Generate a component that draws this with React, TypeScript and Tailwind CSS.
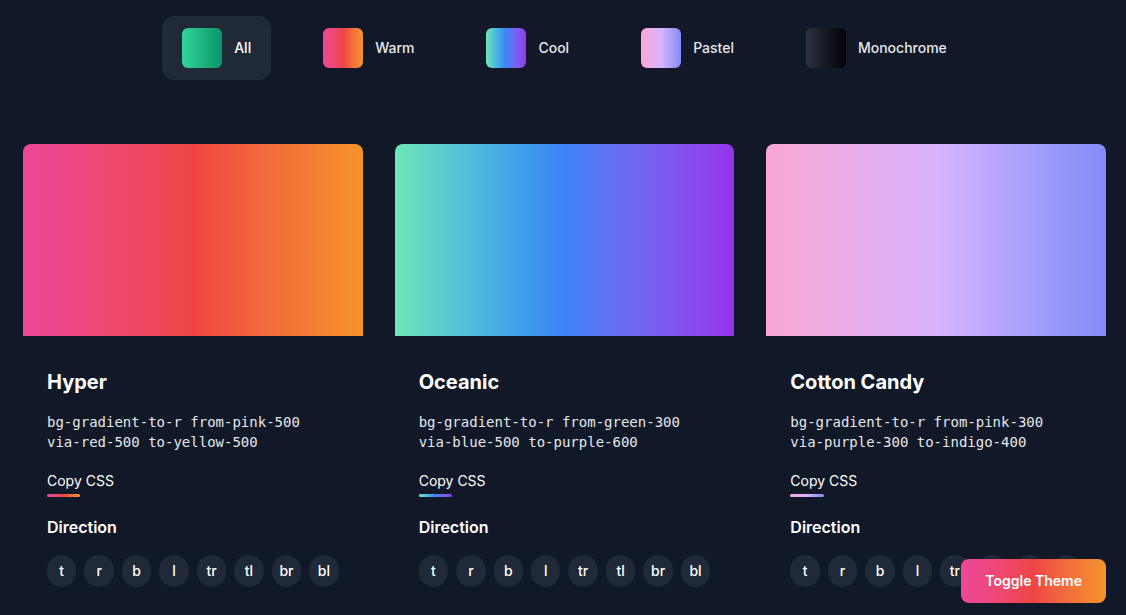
import { useState } from "react";

const tabs = [
  { label: "All", swatch: "bg-gradient-to-r from-[#34d399] to-[#059669]" },
  { label: "Warm", swatch: "bg-gradient-to-r from-[#ec4899] via-[#ef4444] to-[#f4932a]" },
  { label: "Cool", swatch: "bg-gradient-to-r from-[#6ee7b7] via-[#3b82f6] to-[#9333ea]" },
  { label: "Pastel", swatch: "bg-gradient-to-r from-[#f9a8d4] via-[#d8b4fe] to-[#818cf8]" },
  { label: "Monochrome", swatch: "bg-gradient-to-r from-[#2f3440] via-[#141821] to-[#050506]" },
];

const gradients = [
  {
    name: "Hyper",
    css: ["bg-gradient-to-r from-pink-500", "via-red-500 to-yellow-500"],
    bg: "bg-gradient-to-r from-[#ec4899] via-[#ef4444] to-[#f4932a]",
  },
  {
    name: "Oceanic",
    css: ["bg-gradient-to-r from-green-300", "via-blue-500 to-purple-600"],
    bg: "bg-gradient-to-r from-[#6ee7b7] via-[#3b82f6] to-[#9333ea]",
  },
  {
    name: "Cotton Candy",
    css: ["bg-gradient-to-r from-pink-300", "via-purple-300 to-indigo-400"],
    bg: "bg-gradient-to-r from-[#f9a8d4] via-[#d8b4fe] to-[#818cf8]",
  },
];

const directions = ["t", "r", "b", "l", "tr", "tl", "br", "bl"];

export default function App() {
  const [active, setActive] = useState("All");

  return (
    <div className="min-h-screen bg-[#111827] font-['Inter',sans-serif] text-white">
      <nav className="flex justify-center gap-8 pt-4 pl-[3px]">
        {tabs.map((tab) => (
          <button
            key={tab.label}
            type="button"
            onClick={() => setActive(tab.label)}
            className={`flex items-center gap-3 rounded-xl px-5 py-3 text-sm font-medium ${
              active === tab.label ? "bg-[#1f2937] text-white" : "text-[#e5e7eb]"
            }`}
          >
            <span className={`h-10 w-10 rounded-md ${tab.swatch}`} />
            {tab.label}
          </button>
        ))}
      </nav>

      <div className="mt-16 grid grid-cols-3 gap-8 pl-[23px] pr-[20px]">
        {gradients.map((g) => (
          <div key={g.name} className="bg-[#111827]">
            <div className={`h-48 rounded-t-lg ${g.bg}`} />
            <div className="px-6 pt-8 pb-6">
              <h3 className="text-xl font-bold text-white">{g.name}</h3>
              <p className="mt-4 font-['DejaVu_Sans_Mono',monospace] text-sm leading-5 text-[#e5e7eb]">
                {g.css[0]}
                <br />
                {g.css[1]}
              </p>
              <button type="button" className="mt-[19px] inline-flex flex-col text-sm text-white">
                Copy CSS
                <span className={`mt-[3px] h-[3px] w-1/2 rounded-sm ${g.bg}`} />
              </button>
              <h4 className="mt-[18px] text-base font-semibold text-white">Direction</h4>
              <div className="mt-4 flex gap-2">
                {directions.map((d) => (
                  <button
                    key={d}
                    type="button"
                    className="flex h-8 w-[29.5px] items-center justify-center rounded-full bg-[#1f2937] text-sm font-medium text-white"
                  >
                    {d}
                  </button>
                ))}
              </div>
            </div>
          </div>
        ))}
      </div>

      <button
        type="button"
        className="fixed bottom-3 right-5 rounded-lg bg-gradient-to-r from-[#ec4899] via-[#ef4444] to-[#f4932a] px-6 py-3 text-sm font-semibold text-white"
      >
        Toggle Theme
      </button>
    </div>
  );
}
